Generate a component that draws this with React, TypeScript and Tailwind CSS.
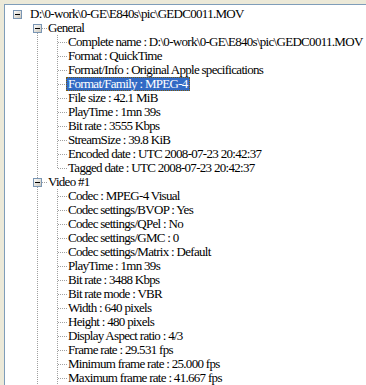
import React from "react";

type Cell = " " | "I" | "T" | "L" | "B" | "Bd" | "Bud";

type Row = { cells: Cell[]; label: string; selected?: boolean };

const DOT = "#a0a0a0";

function vDots(x: number, y0: number, y1: number, key: string) {
  const out: React.ReactNode[] = [];
  for (let y = y0; y <= y1; y++) {
    if (y % 2 === 0) out.push(<rect key={key + y} x={x} y={y} width={1} height={1} fill={DOT} />);
  }
  return out;
}
function hDots(y: number, x0: number, x1: number, key: string) {
  const out: React.ReactNode[] = [];
  for (let x = x0; x <= x1; x++) {
    if (x % 2 === 1) out.push(<rect key={key + x} x={x} y={y} width={1} height={1} fill={DOT} />);
  }
  return out;
}

function Box() {
  return (
    <g>
      <rect x={6.5} y={3.5} width={8} height={8} fill="url(#boxg)" stroke="#7a96b4" />
      <rect x={8} y={7} width={5} height={1} fill="#000" />
    </g>
  );
}

function CellSvg({ type }: { type: Cell }) {
  let parts: React.ReactNode[] = [];
  if (type === "I") parts = vDots(10, 0, 13, "v");
  if (type === "T") parts = [...vDots(10, 0, 13, "v"), ...hDots(7, 11, 19, "h")];
  if (type === "L") parts = [...vDots(10, 0, 7, "v"), ...hDots(7, 11, 19, "h")];
  if (type === "Bd") parts = [...vDots(10, 12, 13, "v"), ...hDots(7, 15, 19, "h")];
  if (type === "Bud") parts = [...vDots(10, 0, 2, "u"), ...vDots(10, 12, 13, "v"), ...hDots(7, 15, 19, "h")];
  const hasBox = type === "B" || type === "Bd" || type === "Bud";
  return (
    <svg width={20} height={14} className="block shrink-0" shapeRendering="crispEdges">
      <defs>
        <linearGradient id="boxg" x1="0" y1="0" x2="1" y2="1">
          <stop offset="0" stopColor="#ffffff" />
          <stop offset="1" stopColor="#c8c4b8" />
        </linearGradient>
      </defs>
      {parts}
      {hasBox && <Box />}
    </svg>
  );
}

const general = [
  "Complete name : D:\\0-work\\0-GE\\E840s\\pic\\GEDC0011.MOV",
  "Format : QuickTime",
  "Format/Info : Original Apple specifications",
  "Format/Family : MPEG-4",
  "File size : 42.1 MiB",
  "PlayTime : 1mn 39s",
  "Bit rate : 3555 Kbps",
  "StreamSize : 39.8 KiB",
  "Encoded date : UTC 2008-07-23 20:42:37",
  "Tagged date : UTC 2008-07-23 20:42:37",
];

const video = [
  "Codec : MPEG-4 Visual",
  "Codec settings/BVOP : Yes",
  "Codec settings/QPel : No",
  "Codec settings/GMC : 0",
  "Codec settings/Matrix : Default",
  "PlayTime : 1mn 39s",
  "Bit rate : 3488 Kbps",
  "Bit rate mode : VBR",
  "Width : 640 pixels",
  "Height : 480 pixels",
  "Display Aspect ratio : 4/3",
  "Frame rate : 29.531 fps",
  "Minimum frame rate : 25.000 fps",
  "Maximum frame rate : 41.667 fps",
];

const rows: Row[] = [
  { cells: ["B"], label: "D:\\0-work\\0-GE\\E840s\\pic\\GEDC0011.MOV" },
  { cells: [" ", "Bd"], label: "General" },
  ...general.map((g, i): Row => ({
    cells: [" ", "I", i === general.length - 1 ? "L" : "T"],
    label: g,
    selected: g.startsWith("Format/Family"),
  })),
  { cells: [" ", "Bud"], label: "Video #1" },
  ...video.map((v): Row => ({ cells: [" ", "I", "T"], label: v })),
];

export default function App() {
  return (
    <div className="w-[366px] h-[385px] overflow-hidden bg-[#ece9d8] pl-[4px] pt-[4px]">
      <div
        className="h-full border-l border-t border-[#7f9db9] bg-white pl-[2px] pt-[2px] text-black tracking-[-0.7px]"
        style={{ fontFamily: '"Liberation Serif", "Times New Roman", serif' }}
      >
        {rows.map((r, i) => (
          <div key={i} className="flex h-[14px] items-center whitespace-nowrap">
            {r.cells.map((c, j) => (
              <CellSvg key={j} type={c} />
            ))}
            <span
              className={
                r.selected
                  ? "ml-[-1px] h-[14px] border border-dotted border-[#7a5a10] bg-[#316ac5] px-[1px] text-[13px] leading-[12px] text-white"
                  : r.cells.length === 1
                  ? "ml-[2px] h-[14px] px-[1px] text-[13px] leading-[14px]"
                  : "h-[14px] px-[1px] text-[13px] leading-[14px]"
              }
            >
              {r.label}
            </span>
          </div>
        ))}
      </div>
    </div>
  );
}
